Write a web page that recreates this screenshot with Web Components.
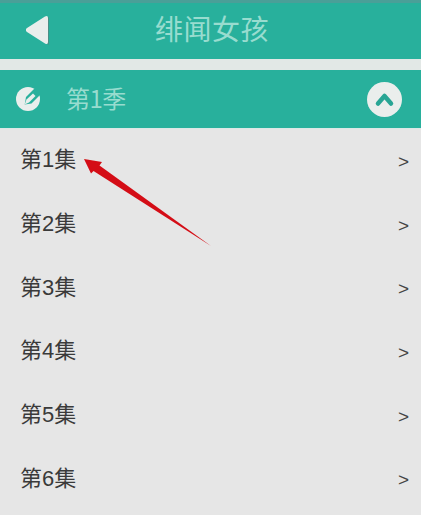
<!DOCTYPE html>
<html lang="zh">
<head>
<meta charset="utf-8">
<title>绯闻女孩</title>
<style>
  html, body { margin: 0; padding: 0; background: #e6e6e6; }
  body { width: 421px; height: 515px; overflow: hidden; font-family: "Liberation Sans", "Noto Sans CJK SC", sans-serif; }
</style>
</head>
<body>
<app-screen>
  <top-bar title="绯闻女孩"></top-bar>
  <season-bar label="第1季"></season-bar>
  <episode-list count="6"></episode-list>
</app-screen>

<script>
class AppScreen extends HTMLElement {
  constructor() {
    super();
    this.attachShadow({ mode: 'open' });
    this.shadowRoot.innerHTML = `
      <style>
        :host { display: flex; flex-direction: column; position: relative; width: 421px; height: 515px; overflow: hidden; }
        svg { position: absolute; left: 0; top: 0; pointer-events: none; }
      </style>
      <slot></slot>
      <svg width="421" height="515" viewBox="0 0 421 515">
        <defs><filter id="soft" x="-10%" y="-10%" width="120%" height="120%"><feGaussianBlur stdDeviation="0.6"/></filter></defs>
        <path d="M84 159 L102 162 L99.5 165.5 L211 246 L93.5 171 L91 173.5 Z" fill="#d40f16" filter="url(#soft)"/>
      </svg>
    `;
  }
}

class TopBar extends HTMLElement {
  constructor() {
    super();
    this.attachShadow({ mode: 'open' });
  }
  connectedCallback() {
    this.shadowRoot.innerHTML = `
      <style>
        :host { display: flex; align-items: center; justify-content: center; position: relative; box-sizing: border-box;
          height: 59px; padding-top: 3px; padding-left: 3px; background: #28b09c; border-top: 3px solid #4a9f98; }
        .title { font-size: 28px; line-height: 32px; color: #98dccf; letter-spacing: 0.5px; margin-top: -3px; }
        svg { position: absolute; left: 24px; top: 10px; }
      </style>
      <svg width="28" height="34" viewBox="0 0 28 34">
        <path d="M1.5 17 L24 3 V31 Z" fill="#4b8f86" transform="translate(1 1)"/>
        <path d="M2 17 Q1.5 16 3 15 L21 3.5 Q24 2 24 5 V29 Q24 32 21 30.5 L3 19 Q1.5 18 2 17 Z" fill="#eaeeec"/>
      </svg>
      <span class="title">${this.getAttribute('title')}</span>
    `;
  }
}

class SeasonBar extends HTMLElement {
  constructor() {
    super();
    this.attachShadow({ mode: 'open' });
  }
  connectedCallback() {
    this.shadowRoot.innerHTML = `
      <style>
        :host { display: flex; align-items: center; height: 58px; margin-top: 11px; background: #28b09c; box-shadow: 0 -11px 0 #e2e8e6; }
        .pen { margin-left: 16px; flex: none; }
        .label { margin: 0 0 4px 26px; font-family: "Noto Sans CJK SC", sans-serif; font-size: 24px; letter-spacing: -0.5px; color: #98dccf; flex: 1; }
        .up { margin: 0 19px 0 0; flex: none; }
      </style>
      <svg class="pen" width="24" height="24" viewBox="0 0 24 24">
        <circle cx="12" cy="12" r="12" fill="#eaeeec"/>
        <path d="M8.7 17.5 L10 10 L18 2 L25 2 L25 7 L15.5 16.5 Z" fill="#28b09c"/>
        <path d="M8.7 17.5 L10.5 12.5 L17 6.5 L19.5 9 L13 15.5 Z" fill="#eaeeec"/>
      </svg>
      <span class="label">${this.getAttribute('label')}</span>
      <svg class="up" width="35" height="35" viewBox="0 0 35 35">
        <circle cx="17.5" cy="17.5" r="17.5" fill="#eaeeec"/>
        <path d="M11 21.5 L17.5 14 L24 21.5" fill="none" stroke="#28a594" stroke-width="4.5" stroke-linecap="round" stroke-linejoin="round"/>
      </svg>
    `;
  }
}

class EpisodeRow extends HTMLElement {
  constructor() {
    super();
    this.attachShadow({ mode: 'open' });
    this.shadowRoot.innerHTML = `
      <style>
        :host { display: flex; align-items: center; justify-content: space-between; height: 63.7px; padding: 0 12px 0 20px;
          font-size: 22px; color: #3a3a3a; }
        .name { margin-bottom: 7px; }
        .chev { font-size: 19px; color: #444; margin-top: 2px; }
      </style>
      <span class="name"><slot></slot></span>
      <span class="chev">&gt;</span>
    `;
  }
}

class EpisodeList extends HTMLElement {
  constructor() {
    super();
    this.attachShadow({ mode: 'open' });
  }
  connectedCallback() {
    const n = Number(this.getAttribute('count') || 0);
    let rows = '';
    for (let i = 1; i <= n; i++) rows += `<episode-row>第${i}集</episode-row>`;
    this.shadowRoot.innerHTML = `
      <style>
        :host { display: flex; flex-direction: column; background: #e6e6e6; border-top: 1px solid #dbe8e6; }
      </style>
      ${rows}
    `;
  }
}

customElements.define('app-screen', AppScreen);
customElements.define('top-bar', TopBar);
customElements.define('season-bar', SeasonBar);
customElements.define('episode-row', EpisodeRow);
customElements.define('episode-list', EpisodeList);
</script>
</body>
</html>
